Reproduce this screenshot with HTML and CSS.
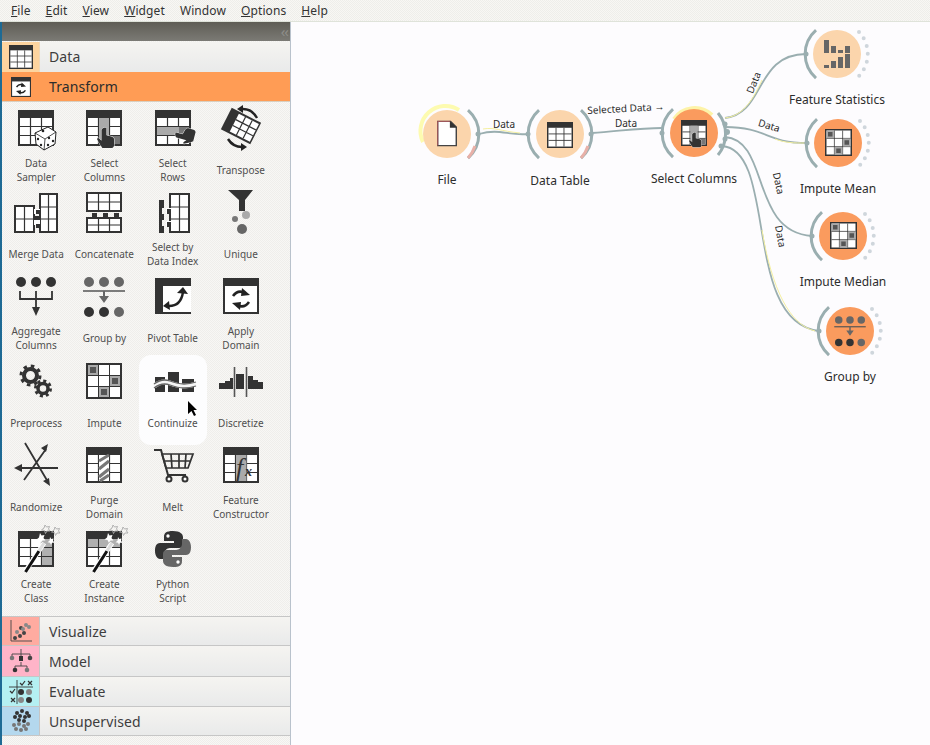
FILE: index.html
```html
<!DOCTYPE html>
<html lang="en">
<head>
<meta charset="utf-8">
<title>Orange Data Mining</title>
<link rel="stylesheet" href="styles.css">
</head>
<body>
<svg class="defs" xmlns="http://www.w3.org/2000/svg">
  <symbol id="tbl" viewBox="0 0 36 36" overflow="visible">
    <rect width="36" height="36" fill="#333"/>
    <rect x="2" y="8" width="32" height="26" fill="#fff"/>
    <path d="M12.500 8v26M23.500 8v26M2 16.500h32M2 25.500h32" stroke="#333" stroke-width="1.200" fill="none"/>
  </symbol>
  <symbol id="hand" viewBox="0 0 20 24" overflow="visible">
    <path d="M7 1q2-1.500 3.500 0V9l6 1.500q2.500 .5 2.500 3V20q0 2-2 3H6Q4.500 21 2 17L0 13q1-2 3 0l2 2V3q0-1 2-2z" fill="#333" stroke="#fff" stroke-width="1" paint-order="stroke"/>
  </symbol>
  <symbol id="refresh" viewBox="0 0 24 24" overflow="visible">
    <path d="M4 9Q9 2 16 6" fill="none" stroke="#222" stroke-width="2.600"/>
    <path d="M13 1l8 7-9 1z" fill="#222"/>
    <path d="M20 15Q15 22 8 18" fill="none" stroke="#222" stroke-width="2.600"/>
    <path d="M11 23l-8-7 9-1z" fill="#222"/>
  </symbol>
  <symbol id="i-sampler" viewBox="0 0 36 36" overflow="visible">
    <use href="#tbl" width="36" height="36"/>
    <path d="M17 23l13-6 8 5-1 12-11 6-8-6z" fill="#fff" stroke="#222" stroke-width="1"/>
    <path d="M26 40l1-11 11-7M27 29l-10-6" fill="none" stroke="#222" stroke-width=".8"/>
    <g fill="#222"><circle cx="25" cy="21" r="1.300"/><circle cx="20" cy="29" r="1.200"/><circle cx="23" cy="35" r="1.200"/><circle cx="31" cy="28" r="1.200"/><circle cx="35" cy="31" r="1.200"/><circle cx="30" cy="35" r="1.200"/></g>
  </symbol>
  <symbol id="i-selcol" viewBox="0 0 36 36" overflow="visible">
    <use href="#tbl" width="36" height="36"/>
    <rect x="13" y="8" width="10" height="26" fill="#aaa"/><rect x="24" y="26" width="10" height="8" fill="#777"/>
    <use href="#hand" x="11" y="17" width="18" height="22"/>
  </symbol>
  <symbol id="i-selrow" viewBox="0 0 36 36" overflow="visible">
    <use href="#tbl" width="36" height="36"/>
    <rect x="2" y="17" width="32" height="8" fill="#aaa"/><rect x="24" y="17" width="10" height="8" fill="#777"/>
    <g transform="translate(18 31) rotate(-75) scale(.85)"><use href="#hand" width="20" height="24"/></g>
  </symbol>
  <symbol id="i-transpose" viewBox="0 0 36 36" overflow="visible">
    <g transform="rotate(27 18 16)">
      <rect x="1.500" y="4" width="33" height="24" fill="#333"/>
      <rect x="10.500" y="6" width="22.500" height="20" fill="#fff"/>
      <path d="M18 6v20M25.500 6v20M10.500 12.700h22.500M10.500 19.300h22.500" stroke="#333" stroke-width="1.200"/>
    </g>
    <path d="M20 -1Q29 -1 34 8" fill="none" stroke="#222" stroke-width="2.500"/><path d="M20 -5l-6 4 6 4z" fill="#222"/>
    <path d="M5 29Q10 37 19 37" fill="none" stroke="#222" stroke-width="2.500"/><path d="M18 33l6 4-6 4z" fill="#222"/>
  </symbol>
  <symbol id="i-merge" viewBox="0 0 36 36" overflow="visible">
    <rect x="-4" y="11" width="21" height="28" fill="#333"/><rect x="-2" y="13" width="17" height="24" fill="#fff"/>
    <path d="M6.500 13v24M-2 25h17" stroke="#333" stroke-width="1.200"/>
    <rect x="21" y="-1" width="19" height="40" fill="#333"/><rect x="23" y="1" width="15" height="36" fill="#fff"/>
    <path d="M30.500 1v36M23 13h15M23 25h15" stroke="#333" stroke-width="1.200"/>
    <rect x="16" y="15" width="6" height="5" fill="#fff"/><rect x="16" y="26" width="6" height="5" fill="#fff"/>
    <rect x="18" y="16" width="5" height="4" fill="#333"/><rect x="17" y="22" width="5" height="4" fill="#333"/><rect x="18" y="30" width="5" height="4" fill="#333"/>
  </symbol>
  <symbol id="i-concat" viewBox="0 0 36 36" overflow="visible">
    <rect y="-2" width="36" height="20" fill="#333"/><rect x="2" y="0" width="32" height="16" fill="#fff"/>
    <path d="M12.500 0v16M23.500 0v16M2 8h32" stroke="#333" stroke-width="1.200"/>
    <rect y="23" width="36" height="16" fill="#333"/><rect x="2" y="25" width="32" height="12" fill="#fff"/>
    <path d="M12.500 25v12M23.500 25v12M2 31h32" stroke="#333" stroke-width="1.200"/>
    <path d="M6 19h5v4H6zM17 19h5v4h-5zM28 19h5v4h-5z" fill="#333"/>
  </symbol>
  <symbol id="i-selidx" viewBox="0 0 36 36" overflow="visible">
    <path d="M4 6h5v8H7v6h2v6H7v6h2v7H4z" fill="#333"/>
    <rect x="14" y="-1" width="21" height="40" fill="#333"/><rect x="16" y="1" width="17" height="36" fill="#fff"/>
    <path d="M24.500 1v36M16 13h17M16 25h17" stroke="#333" stroke-width="1.200"/>
    <path d="M11 14h5v6h-5zM11 27h5v6h-5z" fill="#fff"/><rect x="12" y="15" width="4" height="5" fill="#333"/><rect x="12" y="28" width="4" height="5" fill="#333"/>
  </symbol>
  <symbol id="i-unique" viewBox="0 0 36 36" overflow="visible">
    <path d="M5 -4H30L22 6V17H16V6z" fill="#333"/>
    <circle cx="12" cy="25" r="3" fill="#777"/><circle cx="23" cy="21" r="4" fill="#aaa"/><circle cx="19" cy="35" r="5" fill="#666"/>
  </symbol>
  <symbol id="i-aggregate" viewBox="0 0 36 36" overflow="visible">
    <g fill="#333"><circle cx="3" cy="4" r="5"/><circle cx="18" cy="4" r="5"/><circle cx="33" cy="4" r="5"/></g>
    <path d="M2 13v8h32v-8M18 13v21" fill="none" stroke="#333" stroke-width="1.800"/><path d="M14 29h8l-4 9z" fill="#333"/>
  </symbol>
  <symbol id="i-groupby" viewBox="0 0 36 36" overflow="visible">
    <g fill="#666"><circle cx="3" cy="4" r="5"/><circle cx="18" cy="4" r="5"/><circle cx="33" cy="4" r="5"/></g>
    <path d="M-3 13h42" stroke="#555" stroke-width="1.600"/><path d="M18 13v10" stroke="#666" stroke-width="2"/><path d="M13 18h10l-5 7z" fill="#666"/>
    <circle cx="3" cy="34" r="5" fill="#333"/><circle cx="18" cy="34" r="5" fill="#333"/><circle cx="33" cy="34" r="5" fill="#666"/>
  </symbol>
  <symbol id="i-pivot" viewBox="0 0 36 36" overflow="visible">
    <rect width="36" height="36" fill="#333"/><rect x="8" y="8" width="28" height="26" fill="#fff"/>
    <path d="M14 28Q26 28 28 14" fill="none" stroke="#222" stroke-width="2.400"/><path d="M22 15l6-6 5 7z" fill="#222"/><path d="M14 23l-6 5 7 4z" fill="#222"/>
  </symbol>
  <symbol id="i-apply" viewBox="0 0 36 36" overflow="visible">
    <rect width="36" height="36" fill="#333"/><rect x="2" y="8" width="32" height="26" fill="#fff"/>
    <use href="#refresh" x="6" y="9" width="24" height="24"/>
  </symbol>
  <symbol id="i-preprocess" viewBox="0 0 36 36" overflow="visible">
    <g fill="none" stroke="#333"><circle cx="12.500" cy="12.500" r="6.500" stroke-width="4"/><circle cx="12.500" cy="12.500" r="9.500" stroke-width="3" stroke-dasharray="3.500 3.960"/><circle cx="25" cy="25.500" r="5" stroke-width="3.500"/><circle cx="25" cy="25.500" r="7.500" stroke-width="3" stroke-dasharray="3 2.890"/></g>
  </symbol>
  <symbol id="i-impute" viewBox="0 0 36 36" overflow="visible">
    <rect width="36" height="36" fill="#333"/><rect x="2" y="2" width="32" height="32" fill="#fff"/>
    <path d="M12.500 2v32M23.500 2v32M2 12.500h32M2 23.500h32" stroke="#333" stroke-width="1"/>
    <g fill="#aaa"><rect x="2" y="2" width="10" height="10"/><rect x="24" y="13" width="10" height="10"/><rect x="13" y="24" width="10" height="10"/></g>
    <g fill="#555"><rect x="4" y="4" width="6" height="6"/><rect x="26" y="15" width="6" height="6"/><rect x="15" y="26" width="6" height="6"/></g>
  </symbol>
  <symbol id="i-continuize" viewBox="0 0 36 36" overflow="visible">
    <g fill="#333"><rect x="0" y="14" width="10" height="15"/><rect x="13" y="9" width="11" height="20"/><rect x="27" y="16" width="12" height="13"/></g>
    <path d="M-1 23Q7 17 15 20T29 23T41 21" fill="none" stroke="#f4f4f4" stroke-width="5"/>
    <path d="M-1 21Q7 15 15 18T29 21T41 19" fill="none" stroke="#666" stroke-width="1.300"/>
    <path d="M-1 25Q7 19 15 22T29 25T41 23" fill="none" stroke="#666" stroke-width="1.300"/>
  </symbol>
  <symbol id="i-discretize" viewBox="0 0 36 36" overflow="visible">
    <path d="M-4 20H2V18H7V15H10V26H-4zM13 11H21V26H13zM25 13H30V17H35V19H40V26H25z" fill="#333"/>
    <path d="M11.500 4v30M23.500 4v30" stroke="#555" stroke-width="1.600"/>
  </symbol>
  <symbol id="i-randomize" viewBox="0 0 36 36" overflow="visible">
    <path d="M-2 21H40M7 -4L30 35M6 33L28 2" fill="none" stroke="#333" stroke-width="1.800"/>
    <path d="M-4 21l8-4v8zM32 39l-7-5 6-3zM30 -3l-7 4 5 4z" fill="#333"/>
  </symbol>
  <symbol id="i-purge" viewBox="0 0 36 36" overflow="visible">
    <use href="#tbl" width="36" height="36"/>
    <rect x="13" y="8" width="10" height="26" fill="#fff"/>
    <path d="M13 14l10-6M13 22l10-8M13 30l10-8M14 34l9-6" stroke="#777" stroke-width="3.200"/>
  </symbol>
  <symbol id="i-melt" viewBox="0 0 36 36" overflow="visible">
    <path d="M-1 3H6L13 28H31" fill="none" stroke="#333" stroke-width="2"/>
    <path d="M7 7H38L33 21H11zM16 7l1 14M24 7v14M31 7l-1 14M9 14H36" fill="none" stroke="#333" stroke-width="1.700"/>
    <circle cx="14" cy="32" r="2.500" fill="#fff" stroke="#333" stroke-width="2"/><circle cx="30" cy="32" r="2.500" fill="#fff" stroke="#333" stroke-width="2"/>
  </symbol>
  <symbol id="i-feature" viewBox="0 0 36 36" overflow="visible">
    <use href="#tbl" width="36" height="36"/>
    <rect x="13" y="8" width="10.500" height="26" fill="#aaa"/>
    <text x="13" y="29" class="fx">f</text><text x="22" y="29" class="fx-x">x</text>
  </symbol>
  <symbol id="wand" viewBox="0 0 36 36" overflow="visible">
    <path d="M7 41L26 12" stroke="#fff" stroke-width="5"/><path d="M7.500 41L21 20" stroke="#111" stroke-width="3"/>
    <path d="M21 20L26 12" stroke="#ddd" stroke-width="3"/>
    <path d="M22 2l1.500 2.500 3-.5-1 3 2 2.500-3 0-1.500 2.500-1.500-3-3-.5 2.500-2z" fill="#fff"/>
    <path d="M32 6l1.200 2 2.300-.5-.5 2.200 1.500 2-2.500 0-1 2-1-2-2.500-.5 2-1.500z" fill="#fff"/>
    <path d="M27 -6l1.500 2 3-.5-1 2.500 1.500 2-3 0-1.500 2.500-1-3-3-.5 2.500-2z" fill="none" stroke="#aaa" stroke-width=".9"/>
    <path d="M37 -4l1.500 2 3-.5-1 2.500 1.500 2-3 0-1.500 2.500-1-3-3-.5 2.500-2z" fill="none" stroke="#aaa" stroke-width=".9"/>
  </symbol>
  <symbol id="i-class" viewBox="0 0 36 36" overflow="visible">
    <use href="#tbl" width="36" height="36"/><rect x="24" y="8" width="10" height="26" fill="#b0b0b0"/><path d="M24 16.500h10M24 25.500h10" stroke="#333"/>
    <use href="#wand" width="36" height="36"/>
  </symbol>
  <symbol id="i-instance" viewBox="0 0 36 36" overflow="visible">
    <use href="#tbl" width="36" height="36"/><rect x="2" y="8" width="32" height="8" fill="#b0b0b0"/><path d="M12.500 8v8M23.500 8v8" stroke="#333"/>
    <use href="#wand" width="36" height="36"/>
  </symbol>
  <symbol id="i-python" viewBox="0 0 36 36" overflow="visible">
    <path d="M18 0C11 0 9 2 9 6v4h10v2H5C1 12 0 16 0 20s2 8 5 8h4v-5c0-3 3-6 6-6h9c3 0 4-2 4-4V6c0-3-3-6-10-6z" fill="#333"/>
    <path d="M18 36c7 0 9-2 9-6v-4H17v-2h14c4 0 5-4 5-8s-2-8-5-8h-4v5c0 3-3 6-6 6h-9c-3 0-4 2-4 4v7c0 3 3 6 10 6z" fill="#666"/>
    <circle cx="13" cy="5" r="1.700" fill="#fff"/><circle cx="23" cy="31" r="1.700" fill="#fff"/>
  </symbol>
  <symbol id="i-file" viewBox="0 0 28 36" overflow="visible">
    <path d="M1 1H19L27 9V35H1z" fill="#fff" stroke="#444" stroke-width="2"/><path d="M1 35V1H19" fill="none" stroke="#d9646a" stroke-width="1"/><path d="M18 0V10H28z" fill="#333"/>
  </symbol>
  <symbol id="i-stats" viewBox="0 0 26 28" overflow="visible">
    <g fill="#666"><rect x="0" y="0" width="5" height="13"/><rect x="7" y="6" width="5" height="7"/><rect x="14" y="10" width="5" height="3"/><rect x="21" y="6" width="5" height="7"/>
    <rect x="0" y="25" width="5" height="3"/><rect x="7" y="21" width="5" height="7"/><rect x="14" y="17" width="5" height="11"/><rect x="21" y="14" width="5" height="14"/></g>
  </symbol>
</svg>

<header class="menubar">
  <span><u>F</u>ile</span><span><u>E</u>dit</span><span><u>V</u>iew</span><span><u>W</u>idget</span><span>Window</span><span><u>O</u>ptions</span><span><u>H</u>elp</span>
</header>

<div class="workspace">
  <aside class="toolbox">
    <div class="dock-title"><span class="collapse">‹‹</span></div>

    <div class="category cat-data">
      <div class="cat-icon"><svg class="cat-svg" viewBox="0 0 36 36"><use href="#tbl"/></svg></div><span>Data</span>
    </div>
    <div class="category cat-transform">
      <div class="cat-icon"><svg class="cat-svg small" viewBox="0 0 36 36"><use href="#i-apply"/></svg></div><span>Transform</span>
    </div>

    <div class="palette">
      <div class="tool"><svg class="ico" viewBox="0 0 36 36"><use href="#i-sampler"/></svg><div class="lbl">Data<br>Sampler</div></div>
      <div class="tool"><svg class="ico" viewBox="0 0 36 36"><use href="#i-selcol"/></svg><div class="lbl">Select<br>Columns</div></div>
      <div class="tool"><svg class="ico" viewBox="0 0 36 36"><use href="#i-selrow"/></svg><div class="lbl">Select<br>Rows</div></div>
      <div class="tool"><svg class="ico" viewBox="0 0 36 36"><use href="#i-transpose"/></svg><div class="lbl">Transpose</div></div>

      <div class="tool"><svg class="ico" viewBox="0 0 36 36"><use href="#i-merge"/></svg><div class="lbl">Merge Data</div></div>
      <div class="tool"><svg class="ico" viewBox="0 0 36 36"><use href="#i-concat"/></svg><div class="lbl">Concatenate</div></div>
      <div class="tool"><svg class="ico" viewBox="0 0 36 36"><use href="#i-selidx"/></svg><div class="lbl">Select by<br>Data Index</div></div>
      <div class="tool"><svg class="ico" viewBox="0 0 36 36"><use href="#i-unique"/></svg><div class="lbl">Unique</div></div>

      <div class="tool"><svg class="ico" viewBox="0 0 36 36"><use href="#i-aggregate"/></svg><div class="lbl">Aggregate<br>Columns</div></div>
      <div class="tool"><svg class="ico" viewBox="0 0 36 36"><use href="#i-groupby"/></svg><div class="lbl">Group by</div></div>
      <div class="tool"><svg class="ico" viewBox="0 0 36 36"><use href="#i-pivot"/></svg><div class="lbl">Pivot Table</div></div>
      <div class="tool"><svg class="ico" viewBox="0 0 36 36"><use href="#i-apply"/></svg><div class="lbl">Apply<br>Domain</div></div>

      <div class="tool"><svg class="ico" viewBox="0 0 36 36"><use href="#i-preprocess"/></svg><div class="lbl">Preprocess</div></div>
      <div class="tool"><svg class="ico" viewBox="0 0 36 36"><use href="#i-impute"/></svg><div class="lbl">Impute</div></div>
      <div class="tool hover"><svg class="ico" viewBox="0 0 36 36"><use href="#i-continuize"/></svg><div class="lbl">Continuize</div>
        <svg class="cursor" viewBox="0 0 10 15"><path d="M0 0L9 9H5.500L8 14 6 15 3.500 10 0 13z" fill="#000"/></svg>
      </div>
      <div class="tool"><svg class="ico" viewBox="0 0 36 36"><use href="#i-discretize"/></svg><div class="lbl">Discretize</div></div>

      <div class="tool"><svg class="ico" viewBox="0 0 36 36"><use href="#i-randomize"/></svg><div class="lbl">Randomize</div></div>
      <div class="tool"><svg class="ico" viewBox="0 0 36 36"><use href="#i-purge"/></svg><div class="lbl">Purge<br>Domain</div></div>
      <div class="tool"><svg class="ico" viewBox="0 0 36 36"><use href="#i-melt"/></svg><div class="lbl">Melt</div></div>
      <div class="tool"><svg class="ico" viewBox="0 0 36 36"><use href="#i-feature"/></svg><div class="lbl">Feature<br>Constructor</div></div>

      <div class="tool"><svg class="ico" viewBox="0 0 36 36"><use href="#i-class"/></svg><div class="lbl">Create<br>Class</div></div>
      <div class="tool"><svg class="ico" viewBox="0 0 36 36"><use href="#i-instance"/></svg><div class="lbl">Create<br>Instance</div></div>
      <div class="tool"><svg class="ico" viewBox="0 0 36 36"><use href="#i-python"/></svg><div class="lbl">Python<br>Script</div></div>
    </div>

    <div class="category cat-visualize">
      <div class="cat-icon"><svg class="cat-svg" viewBox="0 0 24 24"><path d="M2 1V22H23" fill="none" stroke="#444" stroke-width=".9"/><g fill="#444"><circle cx="6" cy="19" r="2"/><circle cx="11" cy="17" r="2"/><circle cx="15" cy="14" r="2"/><circle cx="12" cy="9" r="2"/></g><g fill="#888"><circle cx="8" cy="13" r="2"/><circle cx="14" cy="10" r="2"/><circle cx="20" cy="8" r="2"/><circle cx="17" cy="6" r="2"/></g></svg></div><span>Visualize</span>
    </div>
    <div class="category cat-model">
      <div class="cat-icon"><svg class="cat-svg" viewBox="0 0 24 24"><path d="M12 0v8M3 8V5H21V8M12 13V17M6 21V17H18V21" fill="none" stroke="#444" stroke-width=".9"/><rect x="10" y="7" width="4" height="5" fill="#333"/><circle cx="3" cy="9" r="2.300" fill="#777"/><circle cx="21" cy="9" r="2.300" fill="#444"/><circle cx="6" cy="21" r="2.300" fill="#333"/><circle cx="18" cy="21" r="2.300" fill="#777"/></svg></div><span>Model</span>
    </div>
    <div class="category cat-evaluate">
      <div class="cat-icon"><svg class="cat-svg" viewBox="0 0 24 24"><path d="M0 7H24M8 0V24" stroke="#333" stroke-width=".9"/><path d="M11 3l2 2 3-4M19 1l4 4M23 1l-4 4M1 11l2 2 3-4M2 18l4 4M6 18l-4 4" fill="none" stroke="#333" stroke-width="1.200"/><circle cx="12" cy="12" r="3" fill="#333"/><circle cx="20" cy="12" r="3" fill="#888"/><circle cx="12" cy="20" r="3" fill="#888"/><circle cx="20" cy="20" r="3" fill="#333"/></svg></div><span>Evaluate</span>
    </div>
    <div class="category cat-unsupervised">
      <div class="cat-icon"><svg class="cat-svg" viewBox="0 0 24 24"><g fill="#333"><circle cx="8" cy="4" r="2"/><circle cx="13" cy="2" r="2"/><circle cx="18" cy="4" r="2"/><circle cx="6" cy="8" r="2"/><circle cx="11" cy="7" r="2"/><circle cx="16" cy="8" r="2"/><circle cx="20" cy="7" r="2"/><circle cx="10" cy="11" r="2"/><circle cx="15" cy="12" r="2"/></g><g fill="#777"><circle cx="5" cy="16" r="2"/><circle cx="10" cy="15" r="2"/><circle cx="15" cy="17" r="2"/><circle cx="19" cy="15" r="2"/><circle cx="7" cy="20" r="2"/><circle cx="12" cy="21" r="2"/><circle cx="17" cy="20" r="2"/></g></svg></div><span>Unsupervised</span>
    </div>
  </aside>

  <main class="canvas">
    <svg class="scheme" width="639" height="723" viewBox="291 22 639 723">
      <g fill="none" stroke="#9aaeb0" stroke-width="1.800">
        <path d="M479 134C500 128 508 136 528 134"/>
        <path d="M592 133C620 131 640 128 662 128"/>
        <path d="M725 118C765 114 755 54 806 54"/>
        <path d="M725 127C768 127 765 143 807 143"/>
        <path d="M725 137C770 140 750 232 812 236"/>
        <path d="M722 146C778 150 742 322 819 331"/>
      </g>
      <g fill="none" stroke="#f5f0a0" stroke-width="1">
        <path d="M483 129C495 127 500 131 520 133"/>
        <path d="M725 118C745 116 755 95 762 80"/>
        <path d="M775 139C785 143 795 143 805 143"/>
        <path d="M762 230C772 290 790 325 815 331"/>
      </g>

      <g class="edge-text">
        <text x="504" y="128">Data</text>
        <text x="626" y="112" transform="rotate(-3 626 112)">Selected Data →</text>
        <text x="626" y="127">Data</text>
        <text x="757" y="84" transform="rotate(-68 757 84)">Data</text>
        <text x="768" y="129" transform="rotate(17 768 129)">Data</text>
        <text x="775" y="184" transform="rotate(78 775 184)">Data</text>
        <text x="777" y="237" transform="rotate(80 777 237)">Data</text>
      </g>

      <!-- File -->
      <g transform="translate(447 134)">
        <path d="M-24 8A25 25 0 0 1 12 -24" fill="none" stroke="#fdfbb0" stroke-width="4"/><circle r="24" fill="#fbd5ac"/>
        <path d="M21 -24A32 32 0 0 1 21 24" class="port"/><path d="M28 12A32 32 0 0 1 21 24" class="port-red"/>
        <circle cx="31" r="2.500" fill="#9aaeb0"/>
        <use href="#i-file" x="-10" y="-14" width="20" height="27"/>
      </g>
      <text class="node-label" x="447" y="184">File</text>

      <!-- Data Table -->
      <g transform="translate(560 134)">
        <circle r="24" fill="#fbd5ac"/>
        <path d="M-21 -24A32 32 0 0 0 -21 24" class="port"/><path d="M21 -24A32 32 0 0 1 21 24" class="port"/><path d="M28 12A32 32 0 0 1 21 24" class="port-red"/>
        <circle cx="-32" r="2.500" fill="#9aaeb0"/><circle cx="31" r="2.500" fill="#9aaeb0"/>
        <use href="#tbl" x="-13" y="-12" width="26" height="26"/>
      </g>
      <text class="node-label" x="560" y="185">Data Table</text>

      <!-- Select Columns -->
      <g transform="translate(694 133)">
        <path d="M-20 -14A25 25 0 0 1 18 -18" fill="none" stroke="#fdf3a8" stroke-width="4"/><circle r="24" fill="#fa9b5e"/>
        <path d="M-21 -24A32 32 0 0 0 -21 24" class="port"/><path d="M24 -20A33 33 0 0 1 24 22" class="port"/>
        <circle cx="-32" r="2.500" fill="#9aaeb0"/>
        <g fill="#9aaeb0"><circle cx="31" cy="-9" r="2.500"/><circle cx="33" cy="-1" r="3"/><circle cx="31" cy="6" r="2.500"/><circle cx="27" cy="13" r="2.500"/></g>
        <use href="#i-selcol" x="-13" y="-13" width="26" height="26"/>
      </g>
      <text class="node-label" x="694" y="183">Select Columns</text>

      <!-- Feature Statistics -->
      <g transform="translate(837 54)">
        <circle r="24" fill="#fbd5ac"/>
        <path d="M-21 -24A32 32 0 0 0 -21 24" class="port"/>
        <path d="M22 -22A32 32 0 0 1 22 22" class="dots"/>
        <circle cx="-31" r="2.500" fill="#9aaeb0"/>
        <use href="#i-stats" x="-13" y="-14" width="26" height="28"/>
      </g>
      <text class="node-label" x="837" y="104">Feature Statistics</text>

      <!-- Impute Mean -->
      <g transform="translate(838 143)">
        <circle r="24" fill="#fa9b5e"/>
        <path d="M-21 -24A32 32 0 0 0 -21 24" class="port"/>
        <path d="M22 -22A32 32 0 0 1 22 22" class="dots"/>
        <circle cx="-31" r="2.500" fill="#9aaeb0"/>
        <use href="#i-impute" x="-13" y="-14" width="27" height="27"/>
      </g>
      <text class="node-label" x="838" y="193">Impute Mean</text>

      <!-- Impute Median -->
      <g transform="translate(843 236)">
        <circle r="24" fill="#fa9b5e"/>
        <path d="M-21 -24A32 32 0 0 0 -21 24" class="port"/>
        <path d="M22 -22A32 32 0 0 1 22 22" class="dots"/>
        <circle cx="-31" r="2.500" fill="#9aaeb0"/>
        <use href="#i-impute" x="-13" y="-14" width="27" height="27"/>
      </g>
      <text class="node-label" x="843" y="286">Impute Median</text>

      <!-- Group by -->
      <g transform="translate(850 331)">
        <circle r="24" fill="#fa9b5e"/>
        <path d="M-21 -24A32 32 0 0 0 -21 24" class="port"/>
        <path d="M22 -22A32 32 0 0 1 22 22" class="dots"/>
        <circle cx="-31" r="2.500" fill="#9aaeb0"/>
        <use href="#i-groupby" x="-13.500" y="-14" width="27" height="27"/>
      </g>
      <text class="node-label" x="850" y="381">Group by</text>
    </svg>
  </main>
</div>
</body>
</html>
```
FILE: styles.css
```css
* { box-sizing: border-box; }

html, body {
  margin: 0;
  height: 745px;
  overflow: hidden;
  background: #fdfcfe;
  font-family: "Noto Sans", sans-serif;
  color: #3d3d3d;
}

.defs { display: none; }

.menubar {
  display: flex;
  height: 22px;
  background: repeating-conic-gradient(#f8f7f4 0 25%, #eeeeea 0 50%) 0 0 / 2px 2px;
  border-bottom: 1px solid #dfe3da;
  font-size: 12px;
  line-height: 22px;
  color: #333;
  padding-left: 11px;
  gap: 15px;
}
.menubar span { white-space: nowrap; letter-spacing: .1px; }

.workspace {
  display: flex;
  height: 723px;
}

.toolbox {
  width: 291px;
  flex: none;
  display: flex;
  flex-direction: column;
  background: repeating-conic-gradient(#f8f7f5 0 25%, #efeeeb 0 50%) 0 0 / 2px 2px;
  border-left: 2px solid #1e6a94;
  border-right: 1px solid #b9c2cc;
}

.dock-title {
  height: 19px;
  margin-bottom: 1px;
  flex: none;
  background: linear-gradient(#5f5d55, #7b7a75);
  display: flex;
  justify-content: flex-end;
  align-items: center;
  padding-right: 2px;
}
.collapse { color: #8d8d89; font-size: 15px; line-height: 1; letter-spacing: -1px; }

.category {
  flex: none;
  height: 30px;
  display: flex;
  align-items: center;
  font-size: 14px;
  background: linear-gradient(#f5f4f1, #e9eaea);
  border-bottom: 1px solid #c6c6c6;
}
.category span { margin-left: 9px; letter-spacing: .1px; }

.cat-icon {
  width: 38px;
  height: 100%;
  display: flex;
  align-items: center;
  justify-content: center;
  border-right: 1px solid #c6c6c6;
}
.cat-svg { width: 24px; height: 24px; overflow: visible; }
.cat-svg.small { width: 20px; height: 20px; }

.cat-data { border-bottom: none; }
.cat-data span { padding-bottom: 2px; }
.cat-data .cat-icon { background: #fdd49f; border-right-color: #f0d8b8; }
.cat-transform { background: #ff9c55; color: #2c2c2c; border-bottom: 1px solid #d9cfc0; }
.cat-transform .cat-icon { background: #ff9c55; border-right: none; }
.cat-visualize { height: 29px; }
.cat-visualize .cat-icon { background: #ffaba0; }
.cat-model { height: 31px; }
.cat-model .cat-icon { background: #ffb4c8; }
.cat-evaluate .cat-icon { background: #b4f0f2; }
.cat-unsupervised { height: 29px; }
.cat-unsupervised .cat-icon { background: #b4d8ee; }

.palette {
  flex: none;
  height: 515px;
  display: grid;
  grid-template-columns: repeat(4, 68.250px);
  grid-auto-rows: 84.200px;
  align-content: start;
  border-bottom: 1px solid #c6c6c6;
}

.tool {
  position: relative;
  display: flex;
  flex-direction: column;
  align-items: center;
  padding-top: 8px;
}
.tool.hover {
  background: #fdfdfe;
  border-radius: 12px;
  margin-bottom: -6px;
}

.ico { width: 36px; height: 36px; overflow: visible; flex: none; }

.lbl {
  height: 28px;
  margin-top: 10px;
  display: flex;
  align-items: center;
  text-align: center;
  font-size: 10px;
  line-height: 14px;
  color: #4f4f4f;
  white-space: nowrap;
}

.cursor {
  position: absolute;
  left: 49px;
  top: 46px;
  width: 10px;
  height: 15px;
}

.canvas {
  flex: 1;
  min-width: 0;
  background: #fdfcfe;
}

.scheme { display: block; }

.node-label {
  font-size: 12px;
  text-anchor: middle;
  fill: #2c2c2c;
  font-family: "Noto Sans", sans-serif;
}

.edge-text text {
  font-size: 10px;
  text-anchor: middle;
  fill: #2c2c2c;
  font-family: "Noto Sans", sans-serif;
}

.port { fill: none; stroke: #9aaeb0; stroke-width: 3; }
.port-red { fill: none; stroke: #e8b0a8; stroke-width: 3; }
.dots {
  fill: none;
  stroke: #cfd6dc;
  stroke-width: 4;
  stroke-linecap: round;
  stroke-dasharray: 0 8;
}

.fx { font-family: "Liberation Serif", serif; font-style: italic; font-size: 26px; fill: #333; }
.fx-x { font-family: "Liberation Serif", serif; font-style: italic; font-weight: bold; font-size: 14px; fill: #333; }
```
